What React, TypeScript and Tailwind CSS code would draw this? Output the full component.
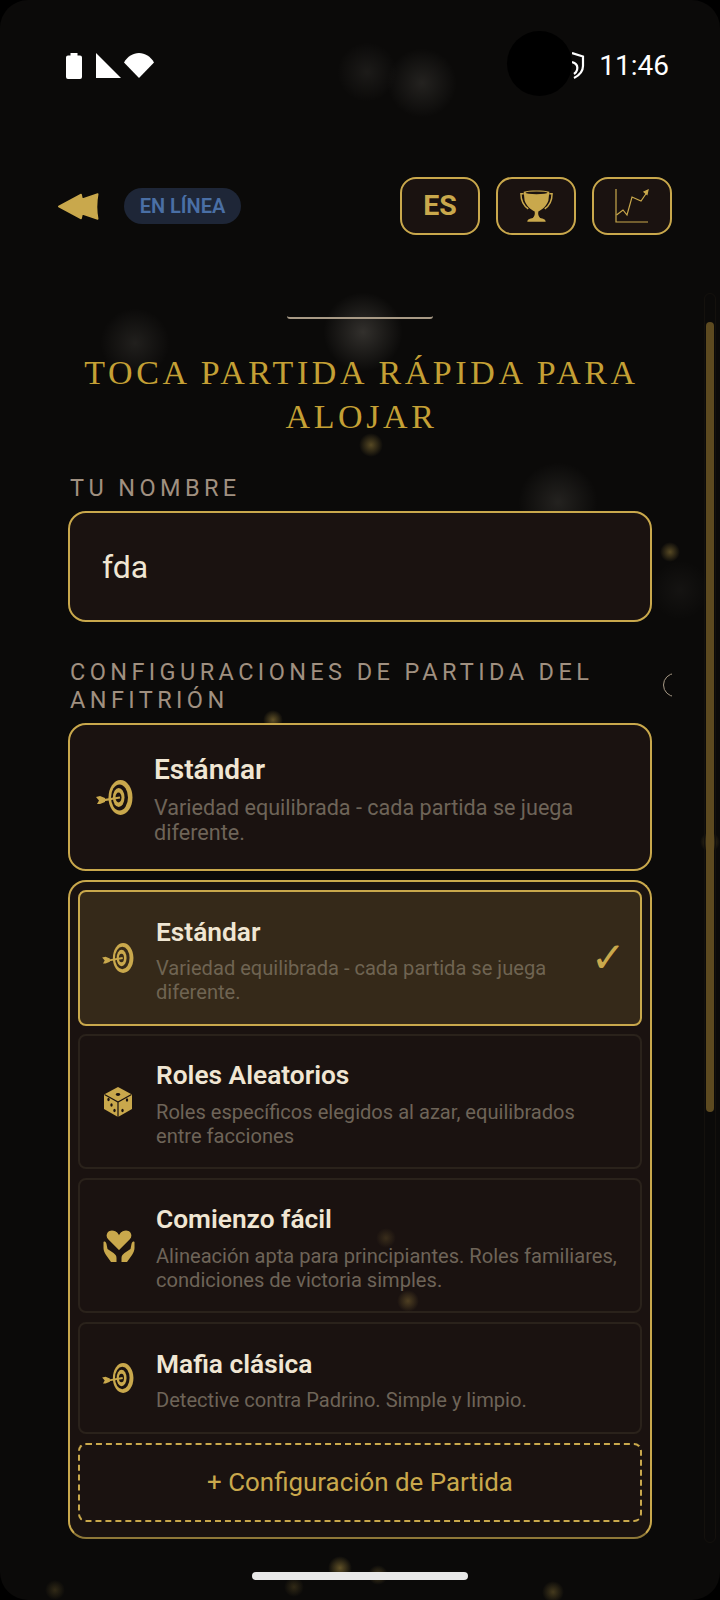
const glows = [
  "left-[337px] top-[42px] size-[60px] bg-[radial-gradient(circle,rgba(255,245,230,0.07),transparent_70%)]",
  "left-[387px] top-[48px] size-[70px] bg-[radial-gradient(circle,rgba(255,245,230,0.1),transparent_70%)]",
  "left-[100px] top-[308px] size-[70px] bg-[radial-gradient(circle,rgba(255,245,230,0.09),transparent_70%)]",
  "left-[323px] top-[292px] size-[80px] bg-[radial-gradient(circle,rgba(255,245,230,0.16),transparent_70%)]",
  "left-[359px] top-[433px] size-[24px] bg-[radial-gradient(circle,rgba(201,168,76,0.4),transparent_70%)]",
  "left-[518px] top-[462px] size-[80px] bg-[radial-gradient(circle,rgba(255,245,230,0.1),transparent_70%)]",
  "left-[660px] top-[542px] size-[20px] bg-[radial-gradient(circle,rgba(201,168,76,0.4),transparent_70%)]",
  "left-[650px] top-[560px] size-[60px] bg-[radial-gradient(circle,rgba(255,245,230,0.04),transparent_70%)]",
  "left-[263px] top-[710px] size-[20px] bg-[radial-gradient(circle,rgba(201,168,76,0.45),transparent_70%)]",
  "left-[700px] top-[832px] size-[20px] bg-[radial-gradient(circle,rgba(201,168,76,0.3),transparent_70%)]",
  "left-[328px] top-[1556px] size-[24px] bg-[radial-gradient(circle,rgba(201,168,76,0.45),transparent_70%)]",
  "left-[368px] top-[1565px] size-[20px] bg-[radial-gradient(circle,rgba(201,168,76,0.3),transparent_70%)]",
  "left-[284px] top-[1577px] size-[20px] bg-[radial-gradient(circle,rgba(201,168,76,0.2),transparent_70%)]",
  "left-[542px] top-[1581px] size-[22px] bg-[radial-gradient(circle,rgba(201,168,76,0.3),transparent_70%)]",
  "left-[45px] top-[1580px] size-[20px] bg-[radial-gradient(circle,rgba(201,168,76,0.2),transparent_70%)]",
];

const overGlows = [
  "left-[376px] top-[1228px] size-[20px] bg-[radial-gradient(circle,rgba(201,168,76,0.18),transparent_70%)]",
  "left-[397px] top-[1290px] size-[22px] bg-[radial-gradient(circle,rgba(201,168,76,0.3),transparent_70%)]",
];

const TargetIcon = ({ className, bg = "#1a1210" }: { className: string; bg?: string }) => (
  <svg viewBox="0 0 37 35" className={className} fill="#c9a84c">
    <ellipse cx="24.5" cy="17.5" rx="12" ry="17.5" />
    <ellipse cx="23.5" cy="17.5" rx="8.5" ry="13" fill={bg} />
    <ellipse cx="22.7" cy="17.5" rx="5.8" ry="9.5" />
    <ellipse cx="22.5" cy="17.5" rx="3" ry="5" fill={bg} />
    <path d="M8 20.2 24 17.5" stroke="#c9a84c" strokeWidth="2.2" />
    <path d="M0 17 4 16l5 2v4l-5 2H1l2-3.500z" />
  </svg>
);

const DiceIcon = () => (
  <svg viewBox="0 0 28 30" className="ml-[2px] h-[30px] w-[28px]">
    <path d="M14 0 28 7.500V22L14 30 0 22V7.500z" fill="#c9a84c" />
    <path d="M0.500 7.500 14 15l13.500-7.500M14 15v15" stroke="#1a1210" strokeWidth="1.200" fill="none" />
    <ellipse cx="14" cy="7.500" rx="2.200" ry="1.400" fill="#1a1210" />
    <ellipse cx="4.500" cy="12.500" rx="1.200" ry="1.700" fill="#1a1210" />
    <ellipse cx="7.500" cy="18" rx="1.200" ry="1.700" fill="#1a1210" />
    <ellipse cx="10.500" cy="23.500" rx="1.200" ry="1.700" fill="#1a1210" />
    <ellipse cx="23" cy="13" rx="1.200" ry="1.700" fill="#1a1210" />
    <ellipse cx="18.500" cy="23.500" rx="1.200" ry="1.700" fill="#1a1210" />
  </svg>
);

const HandsIcon = () => (
  <svg viewBox="0 0 32 32" className="ml-[1px] size-[32px]" fill="#c9a84c">
    <path d="M.5 12c1.500-1 2.500 0 3 2l1 5 6 4c2 1.500 3 3 3 5v4H8L3 25C1.500 23 .5 20 .5 18z" />
    <path d="M31.500 12c-1.500-1-2.500 0-3 2l-1 5-6 4c-2 1.500-3 3-3 5v4h5.500l5-7c1.500-2 2.500-5 2.500-7z" />
    <path d="M16 21 5 10C1 6 3.500 0 9 0c3 0 5.500 1.500 7 4 1.500-2.500 4-4 7-4 5.500 0 8 6 4 10z" stroke="#1a1210" strokeWidth="1.200" />
  </svg>
);

const TrophyIcon = () => (
  <svg viewBox="0 0 36 35" className="size-[33px]" fill="#c9a84c">
    <path d="M4 1.500C10-.5 26-.5 32 1.500L31 11c-2 6-7 10-11 12-.5 3 0 5 2 7 3 .5 6 1.500 6 4H8c0-2.500 3-3.500 6-4 2-2 2.500-4 2-7-4-2-9-6-11-12z" />
    <ellipse cx="18" cy="2.600" rx="12" ry="1.500" fill="#1a1210" />
    <path d="M4 3.500H1c0 6 2.200 12.500 8 16.500M32 3.500h3c0 6-2.200 12.500-8 16.500" fill="none" stroke="#c9a84c" strokeWidth="1.600" />
  </svg>
);

const ChartIcon = () => (
  <svg viewBox="0 0 34 34" className="size-[34px]" fill="none" stroke="#c9a84c" strokeWidth="1.200">
    <path d="M1 0v33h32" />
    <path d="M1.500 26 8 21l4 5 5-18 9 4 5.500-8" />
    <path d="M33 1 29 3l3 2.500z" fill="#c9a84c" />
  </svg>
);

const OptionRow = ({ title, desc, icon, selected, className }: { title: string; desc: React.ReactNode; icon: React.ReactNode; selected?: boolean; className: string }) => (
  <div className={`flex items-center rounded-[8px] border-2 pl-[22px] ${selected ? "border-[#c9a84c] bg-[#352919]" : "border-[#2a221b]"} ${className}`}>
    <div className="flex w-[54px] shrink-0">{icon}</div>
    <div className="min-w-0 flex-1 pt-[4.5px]">
      <div className="text-[26.3px] leading-[30px] font-semibold text-[#f0e6d3]">{title}</div>
      <div className={`mt-[9.5px] text-[20.1px] leading-[24px] ${selected ? "text-[#6f6452]" : "text-[#6e6458]"}`}>{desc}</div>
    </div>
    {selected && <div className="pr-[14px] font-['DejaVu_Sans',sans-serif] text-[42px] leading-none font-bold text-[#c9a84c]">✓</div>}
  </div>
);

export default function App() {
  return (
    <div className="relative h-[1600px] w-[720px] overflow-hidden bg-black font-['Roboto',sans-serif]">
      <div className="absolute inset-0 rounded-[28px] bg-[#0b0a09]" />
      {glows.map((g) => (
        <div key={g} className={`absolute rounded-full ${g}`} />
      ))}

      <div className="relative">
        <div className="mt-[51px] flex h-[28px] items-center justify-between pt-[1px] pr-[51px] pl-[66px]">
          <div className="flex items-center gap-[3px]">
            <svg viewBox="0 0 16 26" className="mr-[11px] h-[26px] w-[16px]" fill="#fff">
              <path d="M4.500 0h7v2.500H14a2 2 0 0 1 2 2V24a2 2 0 0 1-2 2H2a2 2 0 0 1-2-2V4.500a2 2 0 0 1 2-2h2.500z" />
            </svg>
            <svg viewBox="0 0 25 25" className="size-[25px]" fill="#fff">
              <path d="M0 0 25 25H0z" />
            </svg>
            <svg viewBox="0 0 30 25" className="h-[25px] w-[30px]" fill="#fff">
              <path d="M0 9.500C3.500 3.500 9 0 15 0s11.500 3.500 15 9.500L15 25z" />
            </svg>
          </div>
          <span className="text-[28px] leading-none text-white">11:46</span>
        </div>

        <div className="mt-[98px] flex h-[58px] items-center justify-between pr-[48px] pl-[57px]">
          <div className="flex items-center gap-[24px]">
            <svg viewBox="0 0 41 26" className="h-[27px] w-[43px]" fill="#c9a84c" stroke="#c9a84c" strokeWidth="1.500" strokeLinejoin="round">
              <path d="M1.500 13 23 1.500 24 6 39 1c-1.500 8-1.500 16 0 24l-15-5-1 4.500z" />
            </svg>
            <div className="flex h-[36px] w-[117px] items-center justify-center rounded-[18px] bg-[#1e2637] text-[20px] font-semibold text-[#4a6fa5]">EN LÍNEA</div>
          </div>
          <div className="flex gap-[16px]">
            <div className="flex h-[58px] w-[80px] items-center justify-center rounded-[16px] border-2 border-[#c9a84c] bg-[#1a1210] text-[28.5px] font-bold text-[#c9a84c]">ES</div>
            <div className="flex h-[58px] w-[80px] items-center justify-center rounded-[16px] border-2 border-[#c9a84c] bg-[#1a1210]"><TrophyIcon /></div>
            <div className="flex h-[58px] w-[80px] items-center justify-center rounded-[16px] border-2 border-[#c9a84c] bg-[#1a1210]"><ChartIcon /></div>
          </div>
        </div>

        <div className="mt-[81px] px-[68px]">
          <div className="mx-auto h-[3px] w-[146px] rounded-b-[6px] border-b-2 border-[#a89a86]" />
          <h1 className="mt-[32px] pl-[3px] text-center font-['Liberation_Serif',serif] text-[34px] leading-[44px] font-normal tracking-[3.6px] text-[#c4a035]">
            TOCA PARTIDA RÁPIDA PARA ALOJAR
          </h1>
          <div className="mt-[35px] pl-[2px] text-[23.5px] leading-[28px] tracking-[4.4px] text-[#a09080]">TU NOMBRE</div>
          <div className="mt-[9px] flex h-[111px] items-center rounded-[18px] border-2 border-[#c9a84c] bg-[#1a1210] pl-[32px] text-[32px] text-[#f0e6d3]">fda</div>
          <div className="mt-[36px] pl-[2px] text-[23.5px] leading-[28px] tracking-[4.4px] text-[#a09080]">CONFIGURACIONES DE PARTIDA DEL ANFITRIÓN</div>
          <div className="mt-[9px] flex h-[148px] items-center rounded-[18px] border-2 border-[#c9a84c] bg-[#1a1210] pl-[26px]">
            <div className="flex w-[58px] shrink-0"><TargetIcon className="h-[35px] w-[37px]" /></div>
            <div className="min-w-0 pt-[5px]">
              <div className="text-[28px] leading-[32px] font-semibold text-[#f0e6d3]">Estándar</div>
              <div className="mt-[9px] text-[21.6px] leading-[25px] text-[#6e6458]">Variedad equilibrada - cada partida se juega diferente.</div>
            </div>
          </div>
          <div className="mt-[9px] flex h-[659px] flex-col rounded-[18px] border-2 border-[#c9a84c] border-b-[#8f7838] bg-[#1a1210] p-[8px]">
            <OptionRow selected className="h-[136px] shrink-0" title="Estándar" desc={<>Variedad equilibrada - cada partida se juega<br />diferente.</>} icon={<TargetIcon className="h-[30px] w-[32px]" bg="#352919" />} />
            <OptionRow className="mt-[8px] h-[135px] shrink-0" title="Roles Aleatorios" desc={<>Roles específicos elegidos al azar, equilibrados<br />entre facciones</>} icon={<DiceIcon />} />
            <OptionRow className="mt-[9px] h-[135px] shrink-0" title="Comienzo fácil" desc={<>Alineación apta para principiantes. Roles familiares,<br />condiciones de victoria simples.</>} icon={<HandsIcon />} />
            <OptionRow className="mt-[9px] h-[112px] shrink-0" title="Mafia clásica" desc="Detective contra Padrino. Simple y limpio." icon={<TargetIcon className="h-[30px] w-[32px]" />} />
            <div className="mt-[9px] flex h-[79px] shrink-0 items-center justify-center rounded-[8px] border-2 border-dashed border-[#c9a84c] text-[25.9px] text-[#c9a84c]">+ Configuración de Partida</div>
          </div>
        </div>
      </div>

      <svg viewBox="0 0 14 28" className="absolute top-[52px] left-[572px] h-[28px] w-[14px]" fill="none" stroke="#fff" strokeWidth="2.200">
        <path d="M0 1 11 4.500V14c0 5-3 9-9 12" />
        <path d="M0 10c4 1 6 4 5 8-.5 2-1.500 3-3 4" />
      </svg>
      <div className="absolute top-[31px] left-[507px] size-[65px] rounded-full bg-black" />

      {overGlows.map((g) => (
        <div key={g} className={`absolute rounded-full ${g}`} />
      ))}

      <div className="absolute top-[673px] left-[663px] h-[24px] w-[9px] overflow-hidden">
        <div className="size-[24px] rounded-full border-[1.5px] border-[#a89a86]" />
      </div>

      <div className="absolute top-[293px] left-[704px] h-[1250px] w-[12px] rounded-full border border-[#14110d]" />
      <div className="absolute top-[322px] left-[706px] h-[790px] w-[8px] rounded-full bg-[#5d4a20]" />

      <div className="absolute top-[1572px] left-[252px] h-[8px] w-[216px] rounded-full bg-[#e8e8e8]" />
    </div>
  );
}
